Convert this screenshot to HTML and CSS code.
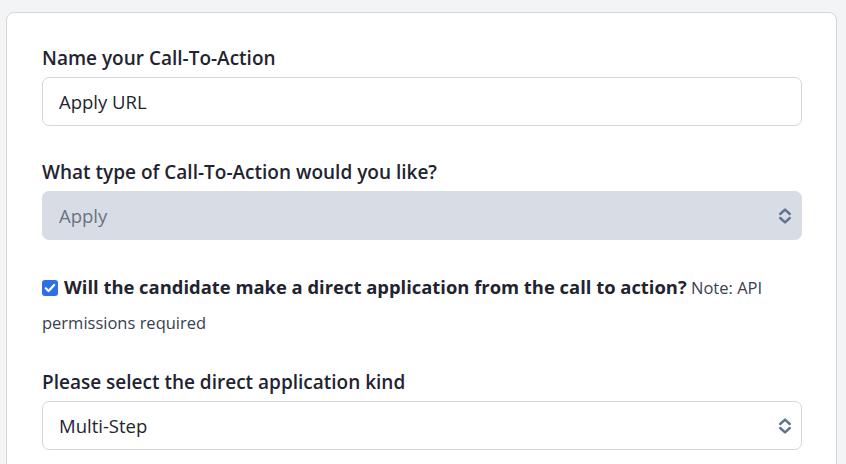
FILE: index.html
```html
<!DOCTYPE html>
<html lang="en">
<head>
<meta charset="utf-8">
<title>Call-To-Action</title>
<link rel="stylesheet" href="styles.css">
</head>
<body>
<div class="card">
  <div class="group">
    <label class="label">Name your Call-To-Action</label>
    <div class="input">Apply URL</div>
  </div>
  <div class="group">
    <label class="label">What type of Call-To-Action would you like?</label>
    <div class="select disabled">
      <span>Apply</span>
      <svg class="chev" viewBox="0 0 14 18" width="14" height="18"><path d="M2.2 7 L7 2.6 L11.8 7 M2.2 11 L7 15.4 L11.8 11" fill="none" stroke="currentColor" stroke-width="2.4" stroke-linecap="round" stroke-linejoin="round"/></svg>
    </div>
  </div>
  <div class="group check-group">
    <p class="check-line"><span class="checkbox"><svg viewBox="0 0 16 16" width="16" height="16"><path d="M3.8 8.3 L6.6 11 L12.2 5" fill="none" stroke="#fff" stroke-width="2.2" stroke-linecap="round" stroke-linejoin="round"/></svg></span><strong class="q">Will the candidate make a direct application from the call to action?</strong> <span class="note">Note: API permissions required</span></p>
  </div>
  <div class="group">
    <label class="label">Please select the direct application kind</label>
    <div class="select">
      <span>Multi-Step</span>
      <svg class="chev" viewBox="0 0 14 18" width="14" height="18"><path d="M2.2 7 L7 2.6 L11.8 7 M2.2 11 L7 15.4 L11.8 11" fill="none" stroke="currentColor" stroke-width="2.4" stroke-linecap="round" stroke-linejoin="round"/></svg>
    </div>
  </div>
</div>
</body>
</html>
```
FILE: styles.css
```css
html, body {
  margin: 0;
  padding: 0;
  background: #f3f4f6;
  font-family: "Open Sans", "Liberation Sans", sans-serif;
  color: #1f2937;
}
body {
  padding: 12px 9px 0 6px;
  height: 464px;
  box-sizing: border-box;
  overflow: hidden;
}
.card {
  background: #fff;
  border: 1px solid #d4d6da;
  border-radius: 8px;
  padding: 33px 34px 40px 35px;
  min-height: 600px;
}
.group {
  margin-bottom: 34px;
}
.label {
  display: block;
  font-size: 19px;
  font-weight: 600;
  line-height: 24px;
  margin-bottom: 7px;
  color: #1f2430;
}
.input, .select {
  height: 49px;
  box-sizing: border-box;
  border: 1px solid #d4d6da;
  border-radius: 7px;
  padding: 0 16px;
  font-size: 18.5px;
  display: flex;
  align-items: center;
  color: #1f2430;
}
.select {
  justify-content: space-between;
  padding-right: 9px;
}
.select.disabled {
  background: #d8dde5;
  border-color: #d8dde5;
  color: #6b7280;
}
.chev {
  color: #5f7390;
  display: block;
}
.check-group {
  margin-top: -5px;
  margin-bottom: 30px;
}
.check-line {
  margin: 0;
  line-height: 35px;
  font-size: 16.5px;
}
.checkbox {
  display: inline-flex;
  width: 16px;
  height: 16px;
  background: #2f6fe4;
  border-radius: 3px;
  vertical-align: -2px;
  margin-right: 6px;
}
.q {
  font-size: 18.4px;
  font-weight: 700;
  color: #1f2430;
}
.note {
  color: #374151;
}
```
